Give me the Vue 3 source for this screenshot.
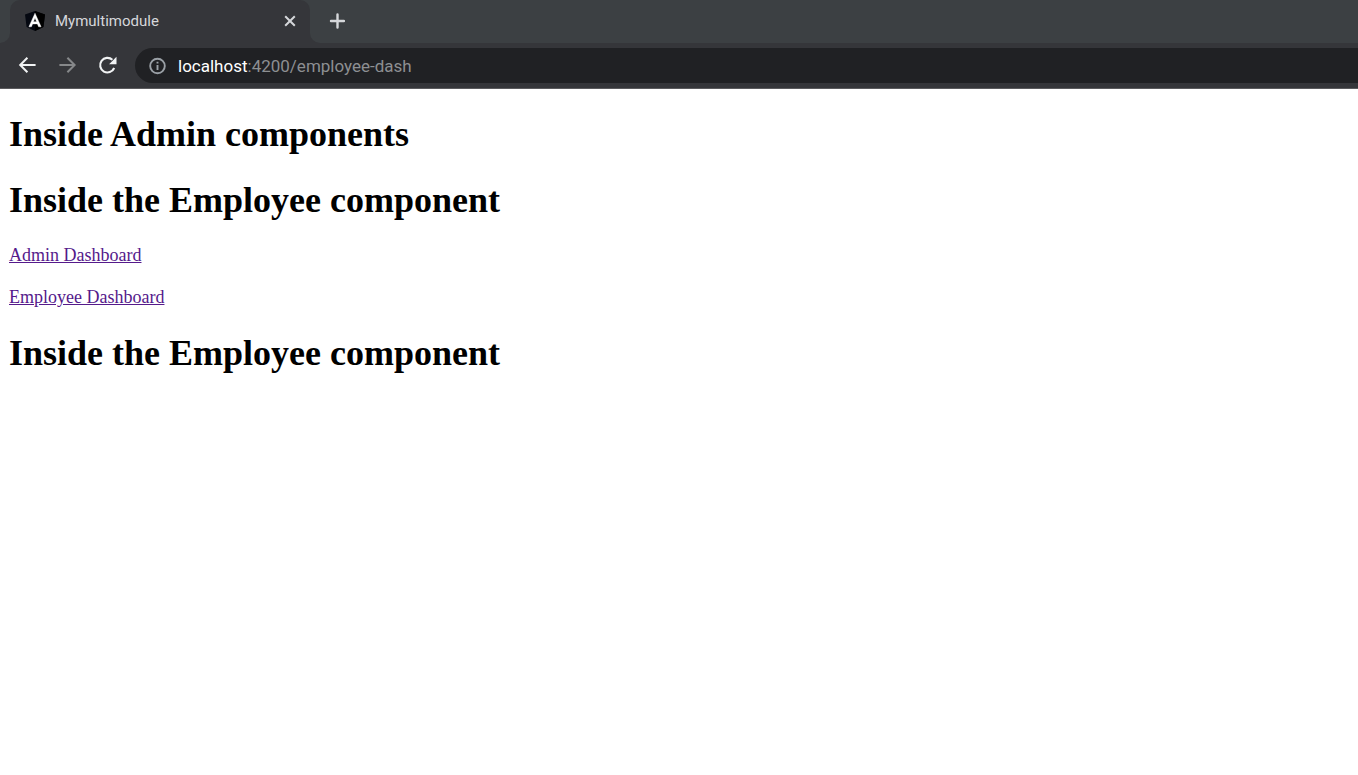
<script setup>
import { ref } from 'vue'

const title = ref('Mymultimodule')
</script>

<template>
  <div class="browser">
    <header class="chrome">
      <div class="tabs">
        <div class="tab">
          <svg class="logo" width="20" height="20" viewBox="0 0 20 20" aria-hidden="true">
            <path d="M10 0L20 3.5L18.4 16L10 20L1.6 16L0 3.5Z" fill="#050811" />
            <path d="M10 0L20 3.5L18.4 16L10 20Z" fill="#000" />
            <path
              d="M10 2.2L3.9 15.8H6.4L7.6 12.9H12.4L13.6 15.8H16.1ZM10 7L11.6 10.7H8.4Z"
              fill="#fff"
              stroke="#fff"
              stroke-width="0.4"
              fill-rule="evenodd"
            />
          </svg>
          <span class="title">{{ title }}</span>
          <button class="close" type="button" aria-label="Close tab">
            <svg width="12" height="12" viewBox="0 0 12 12">
              <path d="M1.2 1.2L10.8 10.8M10.8 1.2L1.2 10.8" stroke="#d5d7da" stroke-width="2" />
            </svg>
          </button>
          <svg class="flare left" width="10" height="10" viewBox="0 0 10 10" aria-hidden="true">
            <path d="M10 0A10 10 0 0 1 0 10H10Z" fill="#35363a" />
          </svg>
          <svg class="flare right" width="10" height="10" viewBox="0 0 10 10" aria-hidden="true">
            <path d="M0 0A10 10 0 0 0 10 10H0Z" fill="#35363a" />
          </svg>
        </div>
        <button class="add" type="button" aria-label="New tab">
          <svg width="16" height="16" viewBox="0 0 16 16">
            <path d="M8.5 1.5V14.5M2 8H15" stroke="#d5d7da" stroke-width="2.4" stroke-linecap="round" />
          </svg>
        </button>
      </div>

      <div class="toolbar">
        <button type="button" aria-label="Back">
          <svg width="20" height="20" viewBox="0 0 20 20" fill="none" stroke="#f1f3f4" stroke-width="2">
            <path d="M17.6 10H2.6M9.4 2.8L2.2 10L9.4 17.2" />
          </svg>
        </button>
        <button type="button" aria-label="Forward">
          <svg width="20" height="20" viewBox="0 0 20 20" fill="none" stroke="#86888a" stroke-width="2">
            <path d="M1.4 10H16.2M9.4 2.8L16.6 10L9.4 17.2" />
          </svg>
        </button>
        <button type="button" aria-label="Reload">
          <svg width="20" height="20" viewBox="0 0 20 20">
            <path d="M16.2 13A7.3 7.3 0 1 1 14.4 4.8" fill="none" stroke="#f1f3f4" stroke-width="2.1" />
            <path d="M18.5 1.8V9.2H11.1Z" fill="#f1f3f4" />
          </svg>
        </button>
        <div class="address">
          <svg width="18" height="18" viewBox="0 0 18 18" aria-hidden="true">
            <circle cx="9.5" cy="9" r="7.3" fill="none" stroke="#9aa0a6" stroke-width="1.9" />
            <path d="M9.5 8V13M9.5 4.8V6.6" stroke="#9aa0a6" stroke-width="1.9" />
          </svg>
          <span class="url"><span class="host">localhost</span>:4200/employee-dash</span>
        </div>
      </div>
    </header>

    <main class="page">
      <h1>Inside Admin components</h1>
      <h1>Inside the Employee component</h1>
      <nav>
        <a href="#admin-dash">Admin Dashboard</a>
        <a href="#employee-dash">Employee Dashboard</a>
      </nav>
      <h1>Inside the Employee component</h1>
    </main>
  </div>
</template>

<style>
body {
  margin: 0;
  background: #fff;
}
</style>

<style scoped>
.chrome {
  background: #35363a;
  border-bottom: 1px solid #5b5b5e;
  font-family: Roboto, "Open Sans", sans-serif;
}

button {
  display: flex;
  align-items: center;
  justify-content: center;
  width: 20px;
  height: 20px;
  padding: 0;
  border: 0;
  background: none;
}

svg {
  flex: none;
}

.tabs {
  display: flex;
  align-items: center;
  gap: 17px;
  height: 43px;
  padding-left: 10px;
  background: #3c4043;
}

.tab {
  position: relative;
  display: flex;
  align-items: center;
  box-sizing: border-box;
  width: 300px;
  height: 43px;
  padding: 0 10px 1px 15px;
  border-radius: 10px 10px 0 0;
  background: #35363a;
}

.add {
  height: 21px;
  padding-bottom: 1px;
}

.title {
  flex: 1;
  margin-left: 10px;
  color: #d5d7da;
  font-size: 15px;
  line-height: 20px;
}

.flare {
  position: absolute;
  bottom: 0;
}

.left {
  right: 100%;
}

.right {
  left: 100%;
}

.toolbar {
  display: flex;
  align-items: center;
  gap: 20px;
  padding: 5px 0 5px 18px;
}

.toolbar button {
  height: 21px;
  padding-bottom: 1px;
}

.address {
  display: flex;
  flex: 1;
  align-items: center;
  gap: 12px;
  height: 35px;
  margin-left: -3px;
  padding-left: 13px;
  border-radius: 18px 0 0 18px;
  background: #202124;
}

.url {
  color: #8d8f92;
  font-size: 17px;
  line-height: 24px;
}

.host {
  color: #fff;
}

.page {
  display: flex;
  flex-direction: column;
  gap: 24px;
  padding: 24px 9px;
  font-family: "Liberation Serif", "Times New Roman", serif;
}

h1 {
  margin: 0;
  color: #000;
  font-size: 36px;
  line-height: 42px;
}

nav {
  display: flex;
  flex-direction: column;
  align-items: flex-start;
  gap: 21px;
}

a {
  color: #551a8b;
  font-size: 18px;
  line-height: 21px;
}
</style>
